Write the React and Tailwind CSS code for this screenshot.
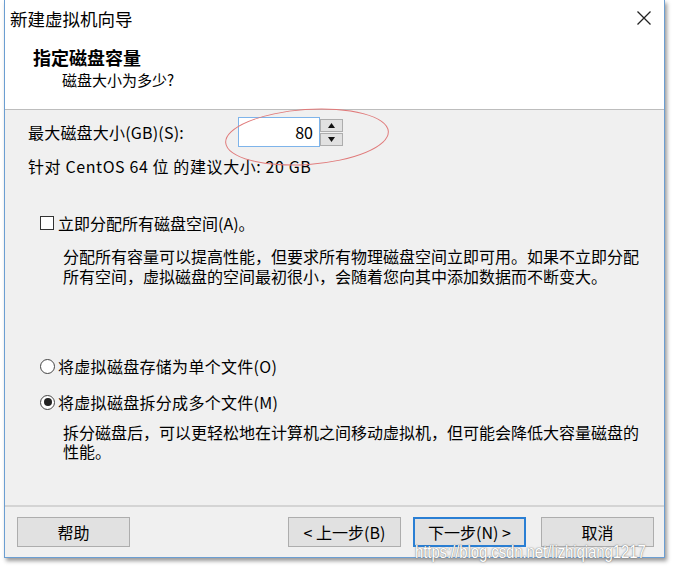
import React from 'react';

const font = { fontFamily: '"Noto Sans CJK SC", "Noto Sans", sans-serif' };

function WinButton({ children, primary }) {
  return (
    <button
      className={`flex h-[30px] w-[113px] items-center justify-center bg-[#e1e1e1] text-[16px] text-black ${
        primary ? 'border-2 border-[#2a7fd4]' : 'border border-[#adadad]'
      }`}
    >
      {children}
    </button>
  );
}

function SpinBox() {
  return (
    <div className="relative flex h-[30px] items-stretch">
      <div className="flex w-[82px] items-center justify-end border border-[#7eb4ea] bg-white pr-[6px] text-[16px]">
        80
      </div>
      <div className="flex w-[23px] flex-col justify-center gap-[1px] py-[1px]">
        <div className="flex h-[13px] items-center justify-center border border-[#adadad] bg-[#e1e1e1]">
          <svg width="7" height="5" viewBox="0 0 7 5"><path d="M3.5 0L7 5H0z" fill="#111" /></svg>
        </div>
        <div className="flex h-[13px] items-center justify-center border border-[#adadad] bg-[#e1e1e1]">
          <svg width="7" height="5" viewBox="0 0 7 5"><path d="M0 0h7L3.5 5z" fill="#111" /></svg>
        </div>
      </div>
      {/* red annotation ellipse */}
      <div className="pointer-events-none absolute left-[-13px] top-[-8px] h-[56px] w-[164px] rotate-[-4deg] rounded-[50%] border border-[#e07a7a]" />
    </div>
  );
}

function Radio({ checked, children }) {
  return (
    <div className="flex h-[20px] items-center">
      <span className="flex h-[15px] w-[15px] items-center justify-center rounded-full border border-[#444] bg-white">
        {checked && <span className="h-[8px] w-[8px] rounded-full bg-[#222]" />}
      </span>
      <span className="ml-[3px] tracking-[0.3px]">{children}</span>
    </div>
  );
}

export default function App() {
  return (
    <div className="relative h-[570px] w-[673px] overflow-hidden bg-white text-[16px] leading-[20px] text-black" style={font}>
      <div className="ml-[4px] flex h-[558px] w-[661px] flex-col border-x border-b border-[#6b9ed2] bg-white shadow-[2px_3px_4px_rgba(0,0,0,0.4)]">
        {/* Title bar */}
        <div className="flex h-[38px] items-center justify-between pl-[5px] pr-[12px]">
          <span className="text-[17.5px]">新建虚拟机向导</span>
          <svg width="16" height="16" viewBox="0 0 16 16" className="mt-[-2px]">
            <path d="M1.5 1.5L14.5 14.5M14.5 1.5L1.5 14.5" stroke="#222" strokeWidth="1.3" />
          </svg>
        </div>

        {/* Header */}
        <div className="flex h-[72px] flex-col border-b border-[#bdbdbd] pl-[28px] pt-[8px]">
          <span className="text-[18px] font-bold leading-[22px]">指定磁盘容量</span>
          <span className="mt-[1px] pl-[29px] text-[15px] leading-[22px]">磁盘大小为多少?</span>
        </div>

        {/* Body */}
        <div className="flex flex-1 flex-col bg-[#f0f0f0] pl-[23px] pt-[7px]">
          <div className="flex items-center">
            <span className="w-[210px] tracking-[0.2px]">最大磁盘大小(GB)(S):</span>
            <SpinBox />
          </div>
          <div className="mt-[9px] tracking-[0.6px]">针对 CentOS 64 位 的建议大小: 20 GB</div>

          <div className="mt-[37px] flex h-[20px] items-center pl-[12px]">
            <span className="h-[14px] w-[14px] border border-[#333] bg-white" />
            <span className="ml-[4px]">立即分配所有磁盘空间(A)。</span>
          </div>
          <p className="mt-[13px] whitespace-nowrap pl-[35px]">
            分配所有容量可以提高性能，但要求所有物理磁盘空间立即可用。如果不立即分配
            <br />
            所有空间，虚拟磁盘的空间最初很小，会随着您向其中添加数据而不断变大。
          </p>

          <div className="mt-[70px] pl-[12px]">
            <Radio>将虚拟磁盘存储为单个文件(O)</Radio>
          </div>
          <div className="mt-[16px] pl-[12px]">
            <Radio checked>将虚拟磁盘拆分成多个文件(M)</Radio>
          </div>
          <p className="mt-[11px] whitespace-nowrap pl-[35px] leading-[19px]">
            拆分磁盘后，可以更轻松地在计算机之间移动虚拟机，但可能会降低大容量磁盘的
            <br />
            性能。
          </p>
        </div>

        {/* Footer */}
        <div className="flex h-[52px] items-center border-t-2 border-[#d4d4d4] bg-[#f0f0f0] pl-[12px] pr-[10px]">
          <WinButton>帮助</WinButton>
          <div className="ml-auto flex items-center">
            <WinButton>&lt; 上一步(B)</WinButton>
            <div className="ml-[12px]">
              <WinButton primary>下一步(N) &gt;</WinButton>
            </div>
            <div className="ml-[15px]">
              <WinButton>取消</WinButton>
            </div>
          </div>
        </div>
      </div>

      {/* watermark */}
      <span
        className="absolute left-[415px] top-[542px] origin-top scale-y-[1.25] text-[15px] leading-[16px] tracking-[-0.1px] text-white [text-shadow:0_0_1px_rgba(80,80,80,0.8),0_0_2px_rgba(80,80,80,0.4)]"
        style={{ fontFamily: '"Liberation Sans", Arial, sans-serif' }}
      >
        https://blog.csdn.net/lizhiqiang1217
      </span>
    </div>
  );
}
